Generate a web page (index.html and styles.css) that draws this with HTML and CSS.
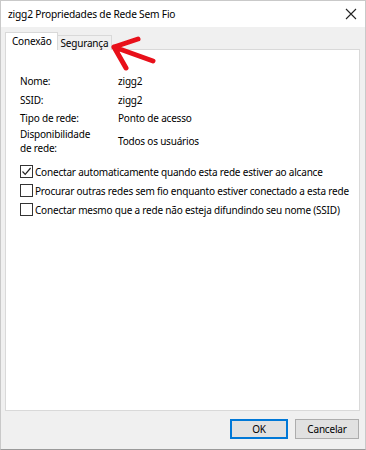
FILE: index.html
```html
<!DOCTYPE html>
<html lang="pt">
<head>
    <meta charset="UTF-8" />
    <title>zigg2 Propriedades de Rede Sem Fio</title>
    <link rel="stylesheet" href="styles.css">
</head>
<body>
    <div class="window">
        <!-- Title bar -->
        <div class="titlebar">
            <span class="title">zigg2 Propriedades de Rede Sem Fio</span>
            <svg class="close" width="12" height="12" viewBox="0 0 12 12">
                <path d="M1 1 L11 11 M11 1 L1 11" stroke="#222" stroke-width="1.1" fill="none" />
            </svg>
        </div>

        <div class="body">
            <div class="tabs">
                <div class="tab active">Conexão</div>
                <div class="tab">Segurança</div>
            </div>

            <div class="panel">
                <div class="info">
                    <div class="label">Nome:</div>
                    <div class="value">zigg2</div>
                    <div class="label">SSID:</div>
                    <div class="value">zigg2</div>
                    <div class="label">Tipo de rede:</div>
                    <div class="value">Ponto de acesso</div>
                    <div class="label multi">Disponibilidade de rede:</div>
                    <div class="value">Todos os usuários</div>
                </div>

                <div class="options">
                    <label class="option">
                        <span class="box">
                            <svg width="11" height="11" viewBox="0 0 11 11">
                                <path d="M1.5 5.5 L4.2 8.3 L9.6 2" stroke="#222" stroke-width="1.2" fill="none" />
                            </svg>
                        </span>
                        Conectar automaticamente quando esta rede estiver ao alcance
                    </label>
                    <label class="option">
                        <span class="box"></span>
                        Procurar outras redes sem fio enquanto estiver conectado a esta rede
                    </label>
                    <label class="option">
                        <span class="box"></span>
                        Conectar mesmo que a rede não esteja difundindo seu nome (SSID)
                    </label>
                </div>
            </div>

            <div class="footer">
                <button class="btn default">OK</button>
                <button class="btn">Cancelar</button>
            </div>
        </div>

        <!-- red annotation arrow -->
        <svg class="arrow" width="60" height="44" viewBox="0 0 60 44">
            <path d="M7 12 L46 26 M7 12 L31 4 M7 12 L19 33" stroke="#e8101a" stroke-width="5" stroke-linecap="round" stroke-linejoin="round" fill="none" />
        </svg>
    </div>
</body>
</html>
```

FILE: styles.css
```css
body {
    margin: 0;
    font-family: 'Noto Sans', 'Open Sans', sans-serif;
    font-size: 10px;
    letter-spacing: -0.2px;
    color: #000;
    background: #fff;
}

.window {
    position: relative;
    width: 366px;
    height: 450px;
    box-sizing: border-box;
    border: 1px solid #c9c9c9;
    border-bottom-color: #9a9a9a;
    background: #f0f0f0;
    display: flex;
    flex-direction: column;
}

.titlebar {
    height: 26px;
    background: #fff;
    display: flex;
    align-items: center;
    justify-content: space-between;
    padding: 0 6px 0 7px;
}

.title {
    font-size: 10.2px;
    color: #000;
}

.close {
    margin-right: 2px;
}

.body {
    flex: 1;
    display: flex;
    flex-direction: column;
    padding: 6px 5px 0 4px;
}

.tabs {
    display: flex;
    align-items: flex-end;
    height: 17px;
    position: relative;
    z-index: 1;
    margin-bottom: -1px;
}

.tab {
    height: 14px;
    line-height: 14px;
    padding: 0 3px;
    border: 1px solid #d9d9d9;
    border-bottom: none;
    background: #f0f0f0;
}

.tab.active {
    height: 17px;
    line-height: 17px;
    padding: 0 5px 0 6px;
    background: #fff;
    margin-right: -1px;
    position: relative;
    z-index: 2;
}

.panel {
    height: 362px;
    background: #fff;
    border: 1px solid #d9d9d9;
    padding: 21px 14px 0 14px;
    box-sizing: border-box;
}

.info {
    display: grid;
    grid-template-columns: 98px 1fr;
    grid-template-rows: 19px 19px 18px 28px;
    align-items: center;
}

.label.multi {
    line-height: 14px;
    width: 80px;
}

.options {
    margin-top: 7px;
    display: flex;
    flex-direction: column;
}

.option {
    height: 19px;
    display: flex;
    align-items: center;
    gap: 2px;
    white-space: nowrap;
}

.box {
    width: 11px;
    height: 11px;
    border: 1px solid #333;
    display: flex;
    align-items: center;
    justify-content: center;
    flex-shrink: 0;
}

.footer {
    display: flex;
    justify-content: flex-end;
    gap: 7px;
    padding: 8px 1px 0 0;
}

.btn {
    font-family: inherit;
    font-size: 10px;
    letter-spacing: -0.2px;
    height: 20px;
    box-sizing: border-box;
    background: #e1e1e1;
    border: 1px solid #adadad;
    padding: 0;
    width: 64px;
}

.btn.default {
    border-color: #0078d7;
    border-width: 2px;
    width: 58px;
}

.arrow {
    position: absolute;
    left: 106px;
    top: 34px;
    z-index: 5;
}
```
